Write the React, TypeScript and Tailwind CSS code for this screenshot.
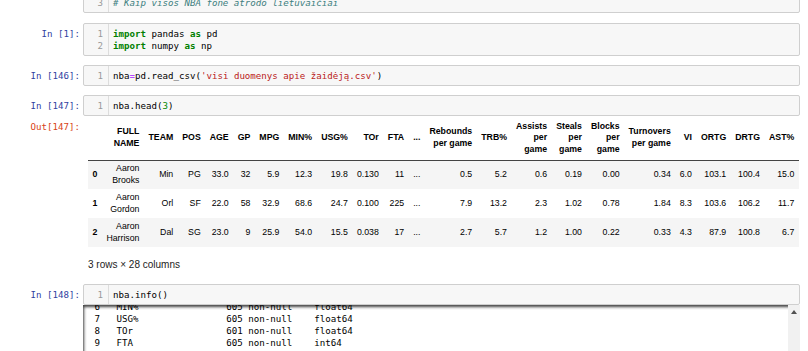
import React from 'react';

const mono = "font-['DejaVu_Sans_Mono',monospace] text-[9.15px] leading-[12px]";

function Kw({ children }: { children: React.ReactNode }) {
  return <span className="font-bold text-[#008000]">{children}</span>;
}

function CodeCell({ prompt, lines, start = 1 }: { prompt: string; lines: React.ReactNode[]; start?: number }) {
  return (
    <div className="flex items-start">
      <div className={`${mono} w-[80px] shrink-0 pt-[5px] text-right text-[#303F9F]`}>{prompt}</div>
      <div className="ml-[3px] flex flex-1 rounded-[2px] border border-[#cfcfcf] bg-[#f7f7f7]">
        <div className={`${mono} w-[25px] shrink-0 border-r border-[#dddddd] py-[3.5px] pr-[5px] text-right text-[#999999]`}>
          {lines.map((_, i) => (
            <div key={i} className="h-[12px]">{start + i}</div>
          ))}
        </div>
        <div className={`${mono} py-[3.5px] pl-[4px] whitespace-pre text-black`}>
          {lines.map((l, i) => (
            <div key={i} className="h-[12px]">{l}</div>
          ))}
        </div>
      </div>
    </div>
  );
}

const headers: React.ReactNode[] = [
  '',
  <>FULL<br />NAME</>,
  'TEAM', 'POS', 'AGE', 'GP', 'MPG', 'MIN%', 'USG%', 'TOr', 'FTA', '...',
  <>Rebounds<br />per game</>,
  'TRB%',
  <>Assists<br />per<br />game</>,
  <>Steals<br />per<br />game</>,
  <>Blocks<br />per<br />game</>,
  <>Turnovers<br />per game</>,
  'VI', 'ORTG', 'DRTG', 'AST%',
];

const rows: { idx: string; name: React.ReactNode; vals: string[] }[] = [
  {
    idx: '0',
    name: <>Aaron<br />Brooks</>,
    vals: ['Min', 'PG', '33.0', '32', '5.9', '12.3', '19.8', '0.130', '11', '...', '0.5', '5.2', '0.6', '0.19', '0.00', '0.34', '6.0', '103.1', '100.4', '15.0'],
  },
  {
    idx: '1',
    name: <>Aaron<br />Gordon</>,
    vals: ['Orl', 'SF', '22.0', '58', '32.9', '68.6', '24.7', '0.100', '225', '...', '7.9', '13.2', '2.3', '1.02', '0.78', '1.84', '8.3', '103.6', '106.2', '11.7'],
  },
  {
    idx: '2',
    name: <>Aaron<br />Harrison</>,
    vals: ['Dal', 'SG', '23.0', '9', '25.9', '54.0', '15.5', '0.038', '17', '...', '2.7', '5.7', '1.2', '1.00', '0.22', '0.33', '4.3', '87.9', '100.8', '6.7'],
  },
];

const infoLines = [
  ' 6   MIN%                605 non-null    float64',
  ' 7   USG%                605 non-null    float64',
  ' 8   TOr                 601 non-null    float64',
  ' 9   FTA                 605 non-null    int64',
];

export default function App() {
  return (
    <div className="h-[351px] w-[808px] overflow-hidden bg-white">
      <div className="-mt-[32px] flex flex-col pr-[8px]">
        {/* first cell, scrolled mostly out of view */}
        <CodeCell
          prompt=""
          lines={[
            <span className="italic text-[#408080]"># NBA žaidėjų duomenys</span>,
            <span className="italic text-[#408080]"># 2017-2018 sezonas</span>,
            <span className="italic text-[#408080]"># Kaip visos NBA fone atrodo lietuvaičiai</span>,
          ]}
        />

        <div className="mt-[10px]">
          <CodeCell
            prompt="In [1]:"
            lines={[
              <><Kw>import</Kw> pandas <Kw>as</Kw> pd</>,
              <><Kw>import</Kw> numpy <Kw>as</Kw> np</>,
            ]}
          />
        </div>

        <div className="mt-[9px]">
          <CodeCell
            prompt="In [146]:"
            lines={[
              <>nba<span className="text-[#AA22FF]">=</span>pd.read_csv(<span className="text-[#BA2121]">'visi duomenys apie žaidėją.csv'</span>)</>,
            ]}
          />
        </div>

        <div className="mt-[9px]">
          <CodeCell
            prompt="In [147]:"
            lines={[<>nba.head(<span className="text-[#008800]">3</span>)</>]}
          />
        </div>

        {/* dataframe output */}
        <div className="flex items-start">
          <div className={`${mono} w-[80px] shrink-0 pt-[5px] text-right text-[#D84315]`}>Out[147]:</div>
          <div className="ml-[3px] flex-1 pl-[5px] font-['Liberation_Sans',Arial,sans-serif] text-[8.75px] leading-[11.5px] text-black">
            <table className="border-collapse">
              <thead>
                <tr className="border-b border-[#444444]">
                  {headers.map((h, i) => (
                    <th key={i} className="h-[44px] whitespace-nowrap px-[4.5px] py-0 text-right align-middle font-bold">
                      {h}
                    </th>
                  ))}
                </tr>
              </thead>
              <tbody>
                {rows.map((r, ri) => (
                  <tr key={r.idx} className={ri % 2 === 0 ? 'bg-[#f5f5f5]' : 'bg-white'}>
                    <th className="h-[29px] px-[4.5px] py-0 text-left align-middle font-bold">{r.idx}</th>
                    <td className="h-[29px] whitespace-nowrap px-[4.5px] py-0 text-right align-middle">{r.name}</td>
                    {r.vals.map((v, vi) => (
                      <td key={vi} className="h-[29px] whitespace-nowrap px-[4.5px] py-0 text-right align-middle">
                        {v}
                      </td>
                    ))}
                  </tr>
                ))}
              </tbody>
            </table>
            <p className="mt-[12px] text-[10px] leading-[12px] text-[#222222]">3 rows × 28 columns</p>
          </div>
        </div>

        <div className="mt-[13px]">
          <CodeCell prompt="In [148]:" lines={['nba.info()']} />
        </div>

        {/* scrolled output */}
        <div className="flex">
          <div className="w-[83px] shrink-0" />
          <div className="flex h-[60px] flex-1 overflow-hidden shadow-[inset_1px_2px_3px_rgba(0,0,0,0.75)]">
            <div className={`${mono} -mt-[4px] flex-1 whitespace-pre pl-[6px] leading-[12.3px] text-black`}>
              {infoLines.map((l) => (
                <div key={l}>{l}</div>
              ))}
            </div>
            <div className="flex w-[12px] shrink-0 justify-center bg-[#f1f1f1] pt-[5px]">
              <svg width="6" height="4" viewBox="0 0 6 4">
                <path d="M0 4 L3 0 L6 4 Z" fill="#505050" />
              </svg>
            </div>
          </div>
        </div>
      </div>
    </div>
  );
}
